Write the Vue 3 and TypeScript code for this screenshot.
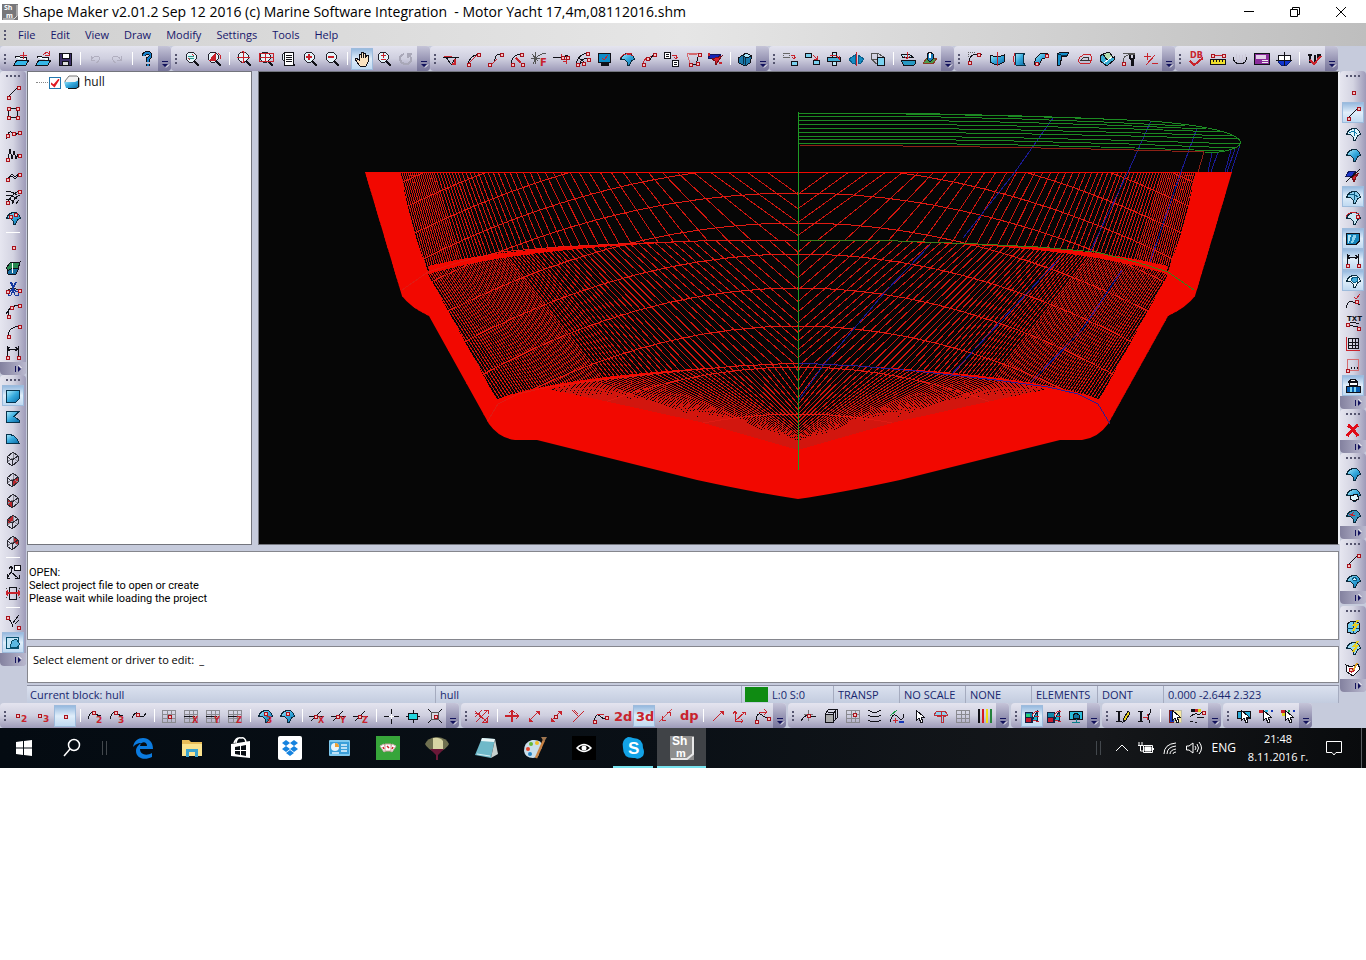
<script setup lang="ts">
import { ref, computed } from 'vue'

interface Shape { d?: string; s: string; f: string; w: number; t?: string; x?: number; y?: number; z?: number }
type Icon = Shape[]

const K = '#111118'
const R = '#c8232c'
const G = '#8a8a90'
const BL = 'url(#sea)'

const L = (d: string, s = K, w = 1): Shape => ({ d, s, f: 'none', w })
const F = (d: string, f: string, s = K, w = 1): Shape => ({ d, s, f, w })
const N = (x: number, y: number): Shape => F(`M${x - 1}.5 ${y - 1}.5h3v3h-3z`, '#f4c4c4', '#a8121c')
const T = (t: string, x: number, y: number, z: number, f = R): Shape => ({ t, x, y, z, s: 'none', f, w: 0 })

const dome = (f = BL): Shape => F('M1.500 8.500L3.500 4.500L7.500 2.500H11.500L14.500 5.500L15.500 8.500L12.500 9.500L10.500 14.500H8.500V11.500L5.500 8.500Z', f, '#0a2a3c')
const lens = (...extra: Shape[]): Icon => [F('M3 3L5 1H9L12 4V8L9 11H5L2 8V4Z', '#e4f4fa', '#22222c'), L('M10 10L15 15', K, 2), ...extra]
const folder: Shape[] = [F('M2 7V5H6L7 6H13V9', '#eef9fc'), F('M1 14L4 9H16L13 14Z', '#35b6e6')]
const cube = (a = 'none', b = 'none', c = 'none', e = 'none'): Icon => [
  F('M2 6L7 9V15L2 11Z', a, 'none'), F('M7 9L13 5V10L7 15Z', b, 'none'), F('M2 6L8 1V8L2 11Z', c, 'none'), F('M8 1L13 5V10L8 7Z', e, 'none'),
  L('M2 11L8 7L13 10M8 7V1', '#8b8b95'), L('M2 6L8 1L13 5V10L7 15L2 11ZM2 6L7 9L13 5M7 9V15', '#2b2b33'),
]
const grid = (c = G): Shape => L('M1.500 2.500H14.500V14.500H1.500ZM6 2V14M10 2V14M1 6.500H15M1 10.500H15', c)
const arrowUp: Shape[] = [L('M3 13L13 3', R), F('M10 3H13V6Z', R, R)]
const cursor: Shape = F('M5 2V13L8 10L10 15L12 14L10 9H13Z', '#fff')
const surfer: Shape[] = [F('M1 4H8V14H1Z', '#18a', '#124'), F('M1 9H7V14H1Z', '#c21a2c', '#124'), F('M8 12L13 4V12Z', '#19b0c8', '#124'), L('M8 8Q10 3 15 3M9 12L15 14M11 8H15', R)]

const icons: Record<string, Icon> = {
  'open-add': [...folder, L('M10.500 1V8M7 4.500H14', R)],
  open: [...folder, L('M8 4Q11 0 14 3M14 0V4H10', R)],
  save: [F('M2 2H14V14H2Z', '#3d3168'), F('M5 2H12V7H5Z', '#fff'), F('M5 10H11V14H5Z', '#ddd')],
  undo: [L('M4 5V9H8M4 9Q8 3 12 6Q14 9 9 12', '#b0aebf')],
  redo: [L('M12 5V9H8M12 9Q8 3 4 6Q2 9 7 12', '#b0aebf')],
  help: [L('M5 5Q5 2 8 2Q12 2 11.500 5Q11 7 8.500 8V11M8.500 13V15', K, 4), L('M5 5Q5 2 8 2Q12 2 11.500 5Q11 7 8.500 8V11M8.500 13V15', '#157fc9', 2)],
  'zoom-back': lens(L('M4 5H10M10 7H4', '#2a9a8a'), L('M8 3L10 5M4 7L6 9', R)),
  'zoom-dyn': lens(F('M4 9L9 3V9Z', R, R), L('M12 2Q16 5 14 8', R)),
  'zoom-all': lens(L('M7.500 0V12M1 6.500H14M5 2L7 0L9 2M5 10L7 12L9 10', R)),
  'zoom-win': [...lens(), L('M1.500 2.500H15.500V10.500H1.500ZM1 6.500H15M7 3V10', R)],
  'zoom-page': lens(F('M4 1H13V14H4Z', '#fff'), L('M6 4H12M6 6H12M6 8H12M6 10H12')),
  'zoom-in': lens(L('M7 3V9M4 6H10', R, 2)),
  'zoom-out': lens(L('M4 6H10', R, 2)),
  pan: [F('M5 14L1 8L2 7L5 9V3H7V7L7 1H9V7L10 2H11V7L13 4H14V11L12 15H6Z', '#fbe3c0')],
  'zoom-pm': lens(L('M7.500 2V7M5 4.500H10M5 8.500H10', R)),
  rotate: [L('M6 3Q2 4 2 8Q3 13 8 13Q13 13 13 8Q13 5 10 3M10 7V3H14', '#a9a8b8', 2)],
  angle: [L('M0 6H16M3 6Q8 14 10 14M13 6L9 13'), L('M1 5H9', R), L('M12 8V13H9', R, 2)],
  'spline-a': [L('M3 13Q4 6 13 3'), L('M3 13L13 3', R), N(3, 13), N(13, 3)],
  'spline-b': [L('M2 13Q8 13 8 8Q8 3 14 3'), L('M5 13L10 8', R), N(2, 13), N(14, 3)],
  'spline-c': [L('M2 14Q2 4 12 3'), L('M7 7L12 12', R, 2), N(12, 3), N(3, 13), N(13, 13)],
  formula: [L('M4 1V13M0 7H9M1 3L7 10M2 13Q5 3 15 2', '#555'), T('F', 9, 15, 10)],
  tangent: [L('M0 6H10L15 4'), L('M8 3V8H13V13M10 10H14', R), N(9, 6), N(14, 6)],
  fan: [L('M1 14Q2 4 12 2M5 13Q6 7 14 7M5 11L10 14M4 7L9 11'), N(12, 2), N(13, 8), N(2, 13), N(8, 12)],
  display: [F('M1.500 2.500H13.500V11.500H1.500Z', '#0e8cc7'), F('M4 12H11V14H4Z', K), L('M5 7L7 9L11 4', R)],
  'surf-red': [dome(), L('M1 7Q6 0 14 5', R), L('M5 4Q9 1 13 3', R)],
  'pt-curve': [L('M2 14Q3 8 6 7Q9 7 13 3', R), L('M9 9L12 4', K), N(13, 3), N(6, 7), N(2, 13)],
  swap: [F('M1.500 1.500H7.500V7.500H1.500Z', '#fff'), L('M3 3H6M3 5H6'), F('M9.500 9.500H15.500V15.500H9.500Z', '#fff'), L('M11 11H14M11 13H14'), L('M9 4H13V8M11 6L13 8L15 6', R)],
  mesh: [L('M2 2L5 13M14 2L2 2Q8 6 14 2', '#d4686d'), L('M5 13H11L14 3'), N(5, 13), N(12, 12), N(14, 3)],
  'surf-rb': [F('M1 7L4 3H10L14 4L8 8Z', '#1624b8', '#11165e'), F('M5 8L15 5L12 9L9 14L8 10Z', '#d9202c', '#7a1018'), L('M2 2V5M12 12H15', R, 2)],
  solid: [F('M1 7L6 4L9 2L15 5L13 12L8 15L2 12Z', '#1a78aa'), F('M6 4L9 2L15 5L9 7Z', '#a8e6fa'), L('M6 4V13M9 7L8 15', '#0a3146')],
  'copy-a': [F('M1 2H8V3H1ZM1 6H8V7H1ZM1 4H2V5H1ZM7 4H8V5H7Z', '#666', 'none'), F('M9.500 10.500H15.500V14.500H9.500Z', '#7ad1ef'), L('M9 4H12V8M10 6L12 8L14 6', R)],
  'copy-b': [F('M1.500 2.500H7.500V6.500H1.500Z', '#7ad1ef'), F('M9.500 9.500H15.500V13.500H9.500Z', '#7ad1ef'), L('M9 4L13 8M13 5V8H10', R)],
  'rot-obj': [F('M6.500 1.500H10.500V14.500H6.500Z', '#bce8f6'), F('M1.500 6.500H14.500V10.500H1.500Z', '#45aed6'), L('M4 5Q9 2 13 8M13 5V9', R)],
  mirror: [F('M7 4L1 8L4 12L7 13Z', '#148cc4', '#0c5d88'), F('M10 4L16 8L13 12L10 13Z', '#148cc4', '#0c5d88'), L('M8.500 1V15', R)],
  scale: [L('M1 2H7V8H1ZM7 2L14 6M1 8L8 14', '#555'), F('M7.500 6.500H14.500V14.500H7.500Z', '#7ad1ef')],
  importer: [F('M1.500 3.500H9.500L13.500 6.500H2.500Z', '#bdeaf8'), F('M1.500 9.500H15.500V12.500L13.500 14.500H3.500Z', '#2798c2'), L('M7 1V8M4 5L7 8L10 5', R)],
  project: [F('M1 12L5 7H15L11 13Z', '#4d9a4b', '#8a3a22'), F('M5 3L8 1L11 3V8L8 11L5 8Z', '#167db9'), L('M8 2V7', '#fff', 2)],
  round: [L('M2 14V11Q2 4 9 3H15'), F('M1 1H2V2H1ZM3 1H4V2H3ZM5 1H6V2H5ZM1 3H2V4H1ZM1 5H2V6H1ZM7 1H8V2H7Z', '#666', 'none'), N(11, 3), N(2, 11)],
  shell: [F('M1 4L4 5H12L15 4V11L11 13H5L1 11Z', BL), L('M8.500 1V15', R)],
  wall: [F('M5 2H14L12 5V11L14 14H5L4 10V6Z', BL, '#0a3146'), L('M4 2Q1 8 4 14', R)],
  pipe: [F('M1 13L3 7L8 2H14L15 6L9 8L6 14Z', BL), N(3, 12), N(13, 4)],
  bracket: [F('M2 3L6 1H14L12 5H7L5 14H2Z', '#138dc8'), L('M2 3L6 4H12', '#06324a')],
  ring: [L('M1 10L3 6L8 3H13L15 7L13 12H3Z', R), L('M4 9L7 6H11L12 9Z', '#333')],
  fold: [F('M1 5L4 3L8 8L15 6V9L8 15L1 10Z', '#3aaed3'), F('M4 3L10 1L14 6L8 9Z', '#b6dfb0'), L('M5 12L13 6', '#fff')],
  knot: [L('M2 14V9Q3 3 14 3M2 2H14', '#555'), L('M11 8V15', K, 3), L('M9 4V7L11 9L13 7V4', K, 2), N(2, 12)],
  plusminus: [L('M1 5H8M4.500 2V9M3 14L12 4M9 12H15', R)],
  db: [T('DB', 2, 7, 8), L('M2 10L6 14L15 7', R, 2)],
  ruler: [L('M1 4H15', R), N(2, 4), N(13, 4), F('M0.500 8.500H15.500V13.500H0.500Z', '#f1e02d'), L('M3 9V11M6 9V11M9 9V11M12 9V11')],
  bowl: [L('M4 3V11M7 4V13M10 4V13M13 3V10', '#ccc8d8'), L('M1 6Q2 13 8 13Q14 13 15 6')],
  calc: [F('M0.500 2.500H15.500V13.500H0.500Z', '#8b2c9b'), F('M2 4H11V7H2Z', '#e2cfe8', '#e2cfe8'), L('M8 9H14M8 11H14', '#eee')],
  hydro: [F('M2 4H14V10L11 14H5L2 10Z', '#fff'), F('M2 9H14V11L11 14H5L2 11Z', '#1034cc', '#0b1d70'), L('M8.500 1V15M0 9H16')],
  check: [L('M2 4H6M4 3V12M9 4V12M12 3V8M14 3V6', K, 2), L('M4 9L8 13L15 5', R, 2)],

  line: [L('M3 13L13 3'), N(3, 13), N(13, 3)],
  rect: [L('M3.500 3.500H12.500V12.500H3.500Z'), N(3, 3), N(12, 3), N(3, 12), N(12, 12)],
  wave: [L('M1 13Q3 5 6 6T10 8T14 6'), N(2, 9), N(8, 7), N(14, 6)],
  zigzag: [L('M1 13L3 12L5 2L7 12L9 4L11 12L13 7'), N(2, 12), N(14, 8)],
  poly: [L('M2 11L7 6L10 9L14 6M2 11L7 8L10 11L14 7'), N(2, 11), N(14, 6)],
  network: [L('M1 2Q8 3 12 6M1 6Q7 6 12 10M1 10Q7 10 9 14M14 2Q7 5 2 14M15 6Q9 8 7 15M14 11L11 15'), N(14, 2), N(2, 13)],
  'dome-nodes': [dome(), N(5, 6), N(10, 4)],
  point: [N(8, 8)],
  cards: [F('M1 8L5 3L15 2L13 9L5 12Z', '#278a51'), F('M2 11L8 8H14L11 14L3 14Z', '#176d9e'), L('M8 3L7 13', '#fff')],
  trim: [L('M1 12Q4 5 14 9', '#222'), L('M6 1L9 9M11 1L7 9', '#14389e', 2), L('M8 9L3 11V14H6ZM8 9L13 11V14H10Z', '#14389e'), N(2, 10), N(14, 9)],
  tang2: [L('M1 12L6 5L14 3M3 14V8Q5 4 14 3'), N(6, 5), N(14, 3), N(3, 14)],
  arc: [L('M3 14V11Q5 4 14 3'), N(14, 3), N(3, 13)],
  dim: [L('M2 2V14M13 2V14M2 5H13M5 3L2 5L5 7M10 3L13 5L10 7'), N(2, 13), N(13, 13)],
  face: [F('M1.500 2.500H14.500V10.500L10.500 14.500H1.500Z', BL, '#07334c')],
  notch: [F('M1.500 2.500H14L9 7.500L14 11V13.500H1.500Z', BL, '#07334c')],
  quarter: [F('M1 4H4L9 6L12 9L14 13H1Z', BL, '#07334c')],
  'cube-0': cube(), 'cube-1': cube('none', '#b9272d'), 'cube-2': cube('#b9272d'), 'cube-3': cube('none', 'none', '#b9272d'), 'cube-4': cube('none', 'none', 'none', '#b9272d'),
  axes: [L('M2 14L6 8L13 14M6 8V3M4 5L6 2L8 5M2 10V14H5M10 14H14V11'), F('M9.500 1.500H15.500V6.500H9.500Z', '#fff')],
  stretch: [L('M4.500 2V14H11.500V2Z'), F('M1 3H2V4H1ZM1 12H2V13H1ZM14 3H15V4H14ZM14 12H15V13H14Z', '#444', 'none'), L('M1 8H15', R, 2), L('M3 5L1 8L3 11M13 5L15 8L13 11', R)],
  tweak: [L('M2 3Q7 8 8 13M14 1L8 9M10 10L14 6', K), N(2, 3), N(13, 13)],
  'face-sel': [F('M1.500 2.500H13.500V13.500H1.500Z', '#c4e6f6', '#07506e'), F('M5 12L7 6L11 4L15 9L12 13Z', '#5bb8e2', '#084d68')],
  'dome-open': [dome('#dff6fd'), L('M4 7Q8 4 12 8M9 3V10', '#127aa8')],
  dome: [dome()],
  'dome-cut': [F('M1 8L4 3H11L7 8Z', '#1b35c5', '#11165e'), F('M7 9L14 5L11 9L9 14Z', '#d4242d', '#7a1018'), L('M1 14L15 1')],
  'dome-x': [dome('#8bcdec'), L('M4 6Q8 4 13 8M9 3L10 11', '#0b5b81')],
  'dome-red': [dome('#c9e8f5'), L('M1 7Q4 0 14 4', R), N(12, 6)],
  plates: [F('M1.500 2.500H14.500V10L11 13.500H1.500Z', '#1685bb'), F('M3 4H6L4 12H3Z', '#b2e6f7', 'none'), F('M8 4H11Q11 9 7 12H6Z', '#8bd3ee', 'none')],
  'dome-half': [dome('#eaf8fd'), F('M6 7L8 4H12L13 8L9 10Z', '#45addb', '#0a5b81')],
  'curve-check': [L('M1 14Q3 5 8 8T15 10'), L('M9 3L11 5L15 0', R), N(11, 7)],
  txt: [T('TXT', 2, 6, 7, K), L('M2 9Q8 6 14 9M3 10L13 12'), N(2, 9), N(13, 13)],
  gridred: [L('M3.500 2.500H13.500V12.500H3.500ZM7 2V12M10 2V12M3 6H14M3 9H14'), L('M1.500 1V14.500H15', R)],
  bracketred: [L('M2.500 2.500V13.500H13.500V2.500Z', '#d56c70'), L('M6 12V10M9 12V10M12 12V10'), N(2, 13)],
  worker: [F('M4 4L6 1H10L12 4V7H4Z', '#fff'), F('M1 8H15V14H1Z', '#075db0'), L('M3 4H13', K, 2), L('M6 9V14M10 9V14', '#7dd6f3', 2)],
  cross: [L('M3 3Q9 8 13 14M13 3Q8 7 2 14', '#e00b17', 3)],
  'dome-sheet': [dome(), F('M5 9L12 7L14 12L9 14L5 12Z', '#dff4fb')],
  'dome-dots': [dome('#3793bd'), L('M4 6L10 8M9 4L6 8', R)],
  'dome-hole': [dome(), F('M7 6L10 4L12 7L9 8Z', '#d6f0fa', '#0b5b81')],
  'box-flash': [F('M2 5L7 2L14 4V12L9 15L2 13Z', '#72ccef'), L('M2 9H14M8 3V15', '#0b4d6e'), L('M13 1L9 6H12L8 12', '#e7cf20', 2)],
  'dome-flash': [dome('#9bd9f1'), L('M13 1L9 6H12L8 12', '#e7cf20', 2)],
  tag: [F('M1 4L6 6L13 3L15 8L8 15L2 11Z', '#fff'), N(5, 8), L('M12 2L8 10', '#dfa328', 2), L('M6 12L10 9', R)],

  p2: [N(4, 7), T('2', 8, 14, 9)], p3: [N(4, 7), T('3', 8, 14, 9)],
  c2: [L('M1 11Q4 1 8 5T14 7'), N(6, 4), T('2', 9, 15, 9)],
  c3: [L('M1 11Q4 1 8 5T14 7'), N(6, 4), T('3', 9, 15, 9)],
  c0: [L('M1 10Q5 1 9 8Q12 11 15 5'), N(6, 6)],
  grid: [grid(), N(8, 8)],
  gx: [grid(), L('M1 8H12'), T('X', 9, 15, 8)], gy: [grid(), L('M1 8H12'), T('Y', 9, 15, 8)], gz: [grid(), L('M1 8H12'), T('Z', 9, 15, 8)],
  d3: [dome(), N(8, 5), T('3', 9, 15, 9)], d0: [dome(), N(8, 5)],
  lx: [L('M2 13L12 3M0 8H15'), N(6, 8), T('X', 9, 15, 8)], ly: [L('M2 13L12 3M0 8H15'), N(6, 8), T('Y', 9, 15, 8)], lz: [L('M2 13L12 3M0 8H15'), N(6, 8), T('Z', 9, 15, 8)],
  target: [L('M8.500 1V6M8.500 11V16M1 8.500H6M11 8.500H16'), L('M8.500 6V11M6 8.500H11', '#fff')],
  chip: [F('M3.500 5.500H12.500V11.500H3.500Z', '#24d7df'), L('M8 2V5M8 12V15M1 8H3M13 8H15')],
  boxcross: [L('M1 1L15 15M15 1L1 15'), F('M4.500 4.500H11.500V11.500H4.500Z', '#d7d7df', '#555'), N(8, 8)],
  arrows: [L('M1 3L13 14M2 14L14 2M1 9L8 2M8 15L15 8', R), L('M10 2H14V6M9 14H13V10', R), L('M1 5H5V9', R)],
  move: [L('M8 2V14M1 8H15', R, 2), L('M5 5L8 2L11 5M12 5L15 8L12 11', R)],
  diag: [...arrowUp, F('M3 10V13H6Z', R, R)],
  diagn: [...arrowUp, F('M3 10V13H6Z', R, R), N(7, 8)],
  perp: [L('M2 2L8 8M3 14L14 3M4 2L8 6', R)],
  wander: [L('M2 13Q4 4 8 8T14 10'), L('M5 6H12', R), N(2, 13), N(14, 9)],
  t2d: [T('2d', 0, 13, 13)], t3d: [T('3d', 0, 13, 13)], tdp: [T('dp', 0, 12, 13)],
  dashdiag: [L('M1 14L14 1', '#cf4a50'), L('M9 4H12V8M4 8V12H8', R)],
  arrow: arrowUp,
  vee: [L('M3 5V13H11M3 13L13 4', R), L('M1 6L3 3L5 6M10 4H13V7M9 11L11 13L9 15', R)],
  curvearrow: [L('M2 13Q3 3 8 7T14 10'), L('M5 4H13M10 1L13 4L10 7', R), N(2, 13), N(14, 10)],
  crossline: [L('M0 13Q4 6 8 8T15 8'), L('M7 2V13M3 6H12', '#777'), N(7, 7)],
  cubes: [F('M2 6H10V14H2Z', '#aaa'), L('M5 4H12V11M2 6L6 1H14V10L10 14M10 6L14 1')],
  gridnode: [grid(), N(9, 6)],
  contours: [L('M1 2Q8 7 14 2M1 7Q8 11 14 7M1 12Q8 16 14 12', K, 1)],
  shape: [L('M1 14Q4 3 9 9T15 6'), L('M1 8L8 2', '#159a42'), L('M4 12H9M6 10V15', R), L('M10 14H15', '#1537b8', 2)],
  cursor: [cursor],
  'red-dome': [F('M1 7L4 3H12L15 7L10 9V14H8V9Z', '#8fd0ec', '#b8303a'), L('M4 7H13M8 3V12', R)],
  gridg: [grid()],
  bars: [L('M2 1V15', K, 2), L('M6 1V15', '#d51920', 2), L('M10 1V15', '#f0df15', 2), L('M14 1V15', '#24813c', 2)],
  'surf-g': [...surfer, L('M2 7H6', '#26d17b', 3)], 'surf-r': surfer,
  monitor: [F('M1.500 3.500H14.500V11.500H1.500Z', '#2cbdda'), F('M5 7L8 5L11 7V10H5Z', '#1375a0'), L('M8 11V14M4 14H12', '#0a7f8c')],
  pen: [L('M1 3H7M1 13H7', K), L('M4 3V13', K, 2), F('M8 14L9 10L13 3L15 5L11 12Z', '#e6d01d')],
  insert: [L('M1 3H6M1 13H6', K), L('M4 3V13', K, 2), L('M6 9H12M10 6L12 9L10 12', R), L('M13 1V5L11 8L13 15')],
  palette: [F('M2 2H7V14H2Z', '#1537b8', '#802020'), F('M7 2H14V14H7Z', '#f7e79e', '#bba'), cursor],
  swatch: [F('M2 1H5V3H2Z', K), F('M6 1H8V3H6Z', R, R), F('M9 1H11V3H9Z', '#d8d219', '#d8d219'), L('M1 9Q6 4 10 7L14 3M8 9L15 10M1 13H4M6 14H8'), N(14, 4)],
  'cur-face': [F('M1 3H14V10H1Z', '#29acd8'), cursor],
  'cur-dots': [L('M1 3H5', R, 3), L('M7 3H10', '#25b4dc', 2), L('M13 3H15', '#1537b8', 2), cursor],
  'cur-color': [L('M1 3H5', R, 3), L('M2 6H6', '#d8d219', 3), L('M8 3H10', '#22aa55', 2), L('M13 3H15', '#1537b8', 2), cursor],
}

const top = [
  'open-add open save | undo redo | help',
  'zoom-back zoom-dyn | zoom-all zoom-win zoom-page zoom-in zoom-out | *pan zoom-pm rotate',
  'angle spline-a spline-b spline-c formula tangent fan display surf-red pt-curve swap mesh surf-rb | solid',
  'copy-a copy-b rot-obj mirror scale | importer project',
  'round shell wall pipe bracket ring fold knot plusminus',
  'db ruler bowl calc hydro | check',
].map(s => s.split(' '))
const left = [
  'line rect wave zigzag poly network dome-nodes | point cards trim tang2 arc dim',
  '*face notch quarter cube-0 cube-1 cube-2 cube-3 cube-4 | axes stretch | tweak *face-sel',
].map(s => s.split(' '))
const right = [
  'point *line dome-open dome dome-cut *dome-x dome-red *plates *dim *dome-half curve-check txt gridred bracketred *worker',
  'cross', 'dome dome-sheet dome-dots', 'line dome-hole', 'box-flash dome-flash tag',
].map(s => s.split(' '))
const bottom = [
  'p2 p3 *point | c2 c3 c0 | grid gx gy gz | d3 d0 | lx ly lz | target chip boxcross',
  'arrows | move diag diagn perp wander t2d *t3d dashdiag tdp | arrow vee curvearrow',
  'crossline cubes gridnode contours shape cursor red-dome gridg bars',
  '*surf-g surf-r monitor', 'pen insert | palette swatch', 'cur-face cur-dots cur-color',
].map(s => s.split(' '))

const bars = [
  { id: 'top', groups: top }, { id: 'left', groups: left },
  { id: 'right', groups: right }, { id: 'bottom', groups: bottom },
]
const menus = ['File', 'Edit', 'View', 'Draw', 'Modify', 'Settings', 'Tools', 'Help']
const status = ['TRANSP', 'NO SCALE', 'NONE', 'ELEMENTS', 'DONT', '0.000 -2.644 2.323']
const hullVisible = ref(true)
const command = ref('_')

/* Hull body plan; distances are measured outwards from the centreline. */
const CX = 798
const interp = (pts: number[][], x: number): number => {
  for (let i = 1; i < pts.length; i++) {
    const [x0, y0] = pts[i - 1]
    const [x1, y1] = pts[i]
    if (x <= x1) return y0 + ((y1 - y0) * (x - x0)) / (x1 - x0)
  }
  return pts[pts.length - 1][1]
}
const upperChine = [[0, 240], [100, 241], [180, 244], [240, 247], [298, 252], [338, 262], [370, 272], [396, 290]]
const lowerChine = [[0, 363], [60, 366], [118, 371], [198, 380], [250, 387], [280, 394], [300, 404], [312, 424]]
const both = (x0: number, y0: number, x1: number, y1: number): string =>
  `M${(CX - x0).toFixed(1)} ${y0.toFixed(1)}L${(CX - x1).toFixed(1)} ${y1.toFixed(1)}M${(CX + x0).toFixed(1)} ${y0.toFixed(1)}L${(CX + x1).toFixed(1)} ${y1.toFixed(1)}`
const spacing = (first: number, used: number, power: number, least: number): number =>
  Math.max(least, Math.round(first * Math.pow(Math.max(0, 1 - used), power)))

const sections = computed(() => {
  let p = ''
  for (let d = 31; d < 433; d += spacing(22, d / 433, 1.2, 2)) {
    if (d < 94) p += both(d, 172, 0, 172 + d * 0.72)
    else {
      const c = d - (26 + 68 * Math.exp(-(d - 94) / 80))
      p += both(d, 172, c, interp(upperChine, c))
    }
  }
  for (let c = 14; c < 396; c += spacing(16, c / 400, 1.4, 2)) {
    const y = interp(upperChine, c)
    if (c < 140) p += both(c, y, 0, 240 + (123 * c) / 140)
    else {
      const e = c - (140 - (65 * (c - 140)) / 255)
      p += both(c, y, e, interp(lowerChine, e))
    }
  }
  for (let e = 5; e < 310; e += spacing(7, e / 400, 1, 3)) {
    p += both(e, interp(lowerChine, e), 0, 363 + 92 * (1 - Math.exp(-e / 55)))
  }
  return p
})
const buttocks = [[90, 59], [113, 61], [139, 64], [166, 66], [193, 66], [223, 72], [254, 79], [288, 87], [326, 90], [367, 94], [414, 100]]
const arcs = computed(() => buttocks.map(([y, k]) => {
  const w = y === 414 ? 120 : y === 367 ? 240 : 420
  const end = y + (k / 100000) * w * w
  return `M${CX - w} ${end}Q${CX} ${2 * y - end} ${CX + w} ${end}`
}).join(''))
const chine = (pts: number[][], side: number) => 'M' + pts.map(([x, y]) => `${CX + side * x} ${y}`).join('L')
const deckLines = [[113, 1150, 121], [116, 1185, 126], [120, 1206, 129], [124, 1222, 132], [128, 1232, 136], [132, 1238, 139], [136, 1240, 144], [139, 1236, 148], [143, 1224, 151]]
const deck = deckLines.map(([y, x, e]) => `M798 ${y}H860Q${(860 + x) / 2} ${y + 1} ${x} ${e}`).join('')

const tasks = ['edge', 'explorer', 'store', 'dropbox', 'control', 'cards', 'balloon', 'notepad', 'paint', 'eye', 'skype', 'shm']
</script>

<template>
  <main class="app">
    <header class="title">
      <svg class="logo" viewBox="0 0 16 16" aria-hidden="true">
        <path d="M0 0H16V16H0Z" fill="#77777a" /><path d="M1 15H12L15 12V1" fill="none" stroke="#ddd" />
        <text x="2" y="6" font-size="7" font-weight="700" fill="#fff">Sh</text><text x="4" y="14" font-size="7" font-weight="700" fill="#fff">m</text>
      </svg>
      <h1>Shape Maker v2.01.2 Sep 12 2016 (c) Marine Software Integration&nbsp; - Motor Yacht 17,4m,08112016.shm</h1>
      <div class="win">
        <button aria-label="Minimize"><svg viewBox="0 0 12 12"><path d="M1 5.500H11" /></svg></button>
        <button aria-label="Restore"><svg viewBox="0 0 12 12"><path d="M1.500 3.500H8.500V10.500H1.500ZM3.500 3V1.500H10.500V8.500H9" /></svg></button>
        <button aria-label="Close"><svg viewBox="0 0 12 12"><path d="M1 1L11 11M11 1L1 11" /></svg></button>
      </div>
    </header>

    <nav class="menu"><i class="grip"></i><button v-for="m in menus" :key="m">{{ m }}</button></nav>

    <div v-for="bar in bars" :key="bar.id" class="bar" :class="bar.id" role="toolbar" :aria-label="bar.id">
      <div v-for="(g, gi) in bar.groups" :key="gi" class="group">
        <i class="grip"></i>
        <template v-for="(n, i) in g" :key="i">
          <i v-if="n === '|'" class="sep"></i>
          <button v-else class="tool" :class="{ on: n[0] === '*' }" :aria-label="n.replace('*', '')">
            <svg viewBox="0 0 16 16" shape-rendering="crispEdges">
              <template v-for="(s, k) in icons[n.replace('*', '')]" :key="k">
                <text v-if="s.t" :x="s.x" :y="s.y" :font-size="s.z" :fill="s.f" font-weight="700">{{ s.t }}</text>
                <path v-else :d="s.d" :stroke="s.s" :fill="s.f" :stroke-width="s.w" />
              </template>
            </svg>
          </button>
        </template>
        <button class="cap" aria-label="More">
          <svg viewBox="0 0 8 8"><path d="M1 1.500H7" stroke="#12125c" /><path d="M1 4H7L4 7Z" fill="#12125c" /><path d="M5 7.500L8 4.500" stroke="#fff" /></svg>
        </button>
      </div>
    </div>

    <section class="center">
      <div class="work">
        <aside class="tree">
          <i class="dots"></i>
          <input id="hull" v-model="hullVisible" type="checkbox">
          <svg viewBox="0 0 16 16" aria-hidden="true"><path d="M1 7L5 2H13L15 4V13L12 14L2 12Z" fill="#f3f3f3" stroke="#777" /><path d="M0 8H11L15 6V13L12 14H2Z" fill="url(#sea)" /><path d="M14.500 4V13L12 14.500H4" fill="none" stroke="#111" /></svg>
          <label for="hull">hull</label>
        </aside>
        <div class="view">
          <svg viewBox="259 72 1079 472" role="img" aria-label="hull">
            <defs>
              <linearGradient id="sea" x1="0" y1="0" x2="1" y2="1"><stop offset="0" stop-color="#b4eefc" /><stop offset=".5" stop-color="#35a9dd" /><stop offset="1" stop-color="#0b6ca6" /></linearGradient>
              <clipPath id="outline"><path d="M365 172H1232L1195 296Q1187 307 1168 316L1108 424Q1098 438 1082 440H1060L900 480Q840 493 798 499Q757 493 697 480L537 440H515Q499 438 489 424L429 316Q410 307 402 296Z" /></clipPath>
            </defs>
            <g v-if="hullVisible" fill="none" shape-rendering="crispEdges">
              <g clip-path="url(#outline)">
                <path :d="sections" stroke="#d2160e" />
                <path :d="arcs" stroke="#e01a12" />
                <path d="M350 172H400L412 225L429 276L464 340L498 402L520 394L548 389L600 400L700 422L798 450L896 422L996 400L1048 389L1076 394L1098 402L1132 340L1167 276L1184 225L1196 172H1250V510H350Z" fill="#f20800" />
                <path d="M365 172.500H1232" stroke="#f20800" />
                <path d="M429 274Q520 246 740 240Q520 243 429 266ZM1167 274Q1076 246 900 242Q1076 243 1167 266ZM500 405Q560 376 780 364Q560 374 495 400ZM1096 405Q1036 376 820 364Q1036 374 1101 400Z" fill="#f20800" />
                <path :d="chine(upperChine, -1)" stroke="#e01a12" /><path :d="chine(lowerChine, -1)" stroke="#e01a12" />
              </g>
              <path :d="chine(upperChine, 1)" stroke="#3f7d18" /><path :d="chine(lowerChine, 1)" stroke="#2b1d96" />
              <path d="M1053 118L1015 172L963 238M930 245L885 292L825 363L798 401M1151 121L1128 172L1090 252M1060 258L1028 292L950 376M1197 128L1181 172L1150 262M1122 270L1082 330L1030 383M1212 153L1208 172M1218 152L1211 172M1231 150L1225 172M1235 149L1227 172M1240 145L1231 172" stroke="#1a1a94" />
              <path d="M798 145Q1050 147 1204 152L1198 172" stroke="#8c2116" />
              <path :d="deck" stroke="#1c8a22" />
              <path d="M798 113Q1000 114 1150 121Q1238 128 1241 143Q1236 152 1205 153" stroke="#1c8a22" />
              <path d="M798.500 112V470" stroke="#1f9a24" />
            </g>
          </svg>
        </div>
      </div>
      <output class="log">OPEN:<br>Select project file to open or create<br>Please wait while loading the project</output>
      <div class="command"><label for="cmd">Select element or driver to edit:</label><input id="cmd" v-model="command" type="text"></div>
      <footer class="status">
        <span>Current block: hull</span><span>hull</span><span class="layer"><i></i>L:0 S:0</span>
        <span v-for="s in status" :key="s">{{ s }}</span>
      </footer>
    </section>

    <footer class="taskbar">
      <button class="sys" aria-label="Start"><svg viewBox="0 0 24 24"><path d="M4 6L11 5V11.500H4ZM12 5L20 4V11.500H12ZM4 12.500H11V19L4 18ZM12 12.500H20V20L12 19Z" fill="#fff" /></svg></button>
      <button class="sys" aria-label="Search"><svg viewBox="0 0 24 24" fill="none" stroke="#fff" stroke-width="1.500"><circle cx="14" cy="9" r="5.500" /><path d="M10 13L4 20" /></svg></button>
      <i class="handle"></i>
      <button v-for="t in tasks" :key="t" class="task" :class="t" :aria-label="t">
        <svg viewBox="0 0 24 24">
          <path v-if="t === 'edge'" d="M2 11C3 5 7 2 12 2C18 2 22 6 22 13H9C9 19 16 20 21 17V21C13 25 5 22 5 15C5 11 8 8 11 7C6 7 4 9 2 11ZM9 10H16C16 5 10 5 9 10Z" fill="#0b7be0" />
          <g v-else-if="t === 'explorer'"><path d="M2 4H9L11 6H22V20H2Z" fill="#e9bd59" /><path d="M2 8H22V20H2Z" fill="#fbe38e" /><path d="M6 21V13H18V21H15V16H9V21Z" fill="#3ba3cf" /></g>
          <g v-else-if="t === 'store'"><path d="M2 8L21 5V22L2 20Z" fill="#fff" /><path d="M7 7Q8 1 12 2Q16 1 17 6M5 7Q7 2 10 2" fill="none" stroke="#fff" stroke-width="1.500" /><path d="M6 11L11 10V14H6ZM12 10L17 9V14H12ZM6 15H11V19L6 18ZM12 15H17V20L12 19Z" fill="#070c12" /></g>
          <g v-else-if="t === 'dropbox'"><rect width="24" height="24" rx="2" fill="#fff" /><path d="M8 4L12 7L8 10L4 7ZM16 4L20 7L16 10L12 7ZM8 10L12 13L8 16L4 13ZM16 10L20 13L16 16L12 13ZM12 14L16 17L12 20L8 17Z" fill="#1683df" /></g>
          <g v-else-if="t === 'control'"><rect x="2" y="4" width="21" height="16" rx="1" fill="#7ec8ee" /><path d="M3 6H22V18H3Z" fill="#3c9fd9" /><circle cx="8" cy="11" r="4" fill="#e8f5fc" /><path d="M8 11V7A4 4 0 0 1 12 11Z" fill="#f0a030" /><path d="M14 9H20M14 12H20M14 15H20M5 17H12" stroke="#e6f6ff" stroke-width="1.500" /></g>
          <g v-else-if="t === 'cards'"><rect width="24" height="24" fill="#37a53a" /><path d="M4 10L8 8L11 14L8 16ZM16 8L20 10L16 16L13 14Z" fill="#fff" stroke="#c9b0b0" /><path d="M9 8H15V15H9Z" fill="#fff" stroke="#c99" /><path d="M11 10L13 12M7 11L8 13M17 11L16 13" stroke="#d3222a" stroke-width="1.500" /></g>
          <g v-else-if="t === 'balloon'"><path d="M0 8Q2 2 12 1Q22 2 24 8Q22 13 12 17Q2 13 0 8Z" fill="#6f7050" /><path d="M8 2Q15 1 18 5V13H8Z" fill="#d7d4a4" /><path d="M5 13H19L13 19V24H11V19Z" fill="#6a1838" /></g>
          <g v-else-if="t === 'notepad'"><path d="M8 2L21 3L17 22L1 19Z" fill="#6fb9c9" /><path d="M8 2L21 3L20 6L7 5Z" fill="#e8f4f5" /><path d="M21 3L24 18L17 22Z" fill="#c7d1ce" /><path d="M3 18L16 20" stroke="#d6eef2" /></g>
          <g v-else-if="t === 'paint'"><path d="M1 15Q1 6 9 4Q19 3 19 10Q19 14 15 15Q18 21 10 22Q2 22 1 15Z" fill="#c9deea" /><circle cx="5" cy="13" r="2" fill="#e4452c" /><circle cx="8" cy="8" r="2" fill="#64b936" /><circle cx="14" cy="7" r="2" fill="#f0bd26" /><circle cx="7" cy="18" r="2" fill="#2684c4" /><path d="M21 4L13 22" stroke="#c98243" stroke-width="2.500" /><path d="M18 1H24L21 6Z" fill="#a07650" /></g>
          <g v-else-if="t === 'eye'"><rect width="24" height="24" fill="#000" /><path d="M5 12Q12 5 19 12Q12 19 5 12Z" fill="none" stroke="#fff" stroke-width="1.500" /><circle cx="12" cy="12" r="2.500" fill="#fff" /></g>
          <g v-else-if="t === 'skype'"><path d="M7 1Q10 1 12 2Q22 2 22 12Q24 16 22 20Q18 24 14 22Q2 23 2 12Q0 4 7 1Z" fill="#13a3e6" /><text x="7" y="18" font-size="17" font-weight="700" fill="#fff">S</text></g>
          <g v-else><path d="M0 0H24V24H0Z" fill="#8d8d8d" /><path d="M1 23H17L23 18V1" fill="none" stroke="#e8e8e8" stroke-width="2" /><text x="2" y="9" font-size="12" font-weight="700" fill="#fff">Sh</text><text x="6" y="21" font-size="11" font-weight="700" fill="#fff">m</text></g>
        </svg>
      </button>
      <div class="tray">
        <i class="handle"></i>
        <button aria-label="Show hidden icons"><svg viewBox="0 0 16 16"><path d="M2 11L8 5L14 11" /></svg></button>
        <button aria-label="Battery"><svg viewBox="0 0 16 16"><path d="M5.500 5.500H14.500V12.500H5.500ZM15.500 8V10M1 2V5M4 2V5M0 5.500H5M2.500 6V11H5" /><path d="M7 7H13V11H7Z" fill="#fff" /></svg></button>
        <button aria-label="Network"><svg viewBox="0 0 16 16"><path d="M2 14Q2 4 14 3M5 14Q5 7 14 6M8 14Q8 10 14 9M11 14Q11 12 14 12" /></svg></button>
        <button aria-label="Volume"><svg viewBox="0 0 16 16"><path d="M0.500 6H3L7 3V13L3 10H0.500ZM9 6Q11 8 9 10M11 4Q14 8 11 12M13 2Q18 8 13 14" /></svg></button>
        <span class="lang">ENG</span>
        <time>21:48<br>8.11.2016 г.</time>
        <button class="note" aria-label="Notifications"><svg viewBox="0 0 16 16"><path d="M0.500 1.500H15.500V12.500H10L8 15L6 12.500H0.500Z" /></svg></button>
        <i class="peek"></i>
      </div>
    </footer>
  </main>
</template>

<style>
body { margin: 0; background: #fff; }
</style>

<style scoped>
.app {
  height: 80vh;
  min-height: 768px;
  display: grid;
  grid-template: 23px 23px 25px minmax(0, 1fr) 25px 40px / 27px minmax(0, 1fr) 26px;
  grid-template-areas: 'title title title' 'menu menu menu' 'top top top' 'left center right' 'bottom bottom bottom' 'task task task';
  background: #c6cbdc;
  font-family: 'Open Sans', 'Noto Sans', sans-serif;
  font-size: 11px;
  color: #111;
}
button { border: 0; padding: 0; margin: 0; background: none; font: inherit; color: inherit; }
svg { display: block; overflow: visible; }
.title { grid-area: title; display: flex; align-items: center; background: #fff; overflow: hidden; }
.logo { width: 16px; height: 16px; margin: 0 5px 0 2px; }
h1 { margin: 0; font-size: 14px; line-height: 22px; font-weight: 400; white-space: nowrap; color: #000; }
.win { margin-left: auto; display: flex; padding-right: 2px; }
.win button { width: 46px; height: 22px; display: grid; place-items: center; }
.win svg { width: 12px; height: 12px; fill: none; stroke: #000; }
.menu { grid-area: menu; display: flex; align-items: center; background: linear-gradient(90deg, #d0d0d0, #e6e6e6 50%, #bebebe); color: #17176b; }
.menu .grip { margin-right: 1px; }
.menu button { padding: 0 8px 0 7px; line-height: 22px; }
.grip { flex: none; width: 10px; height: 11px; background: radial-gradient(circle, #55556f 1px, transparent 1px) 0 0 / 10px 4px; }

.bar { display: flex; min-width: 0; min-height: 0; }
.top { grid-area: top; }
.bottom { grid-area: bottom; gap: 2px; }
.left, .right { flex-direction: column; }
.left { grid-area: left; padding-right: 1px; }
.right { grid-area: right; }
.group { flex: none; display: flex; align-items: center; border-radius: 4px; background: linear-gradient(#e4e4ef, #cfcfdf 50%, #9d9ab8); }
.left .group, .right .group { flex-direction: column; background: linear-gradient(90deg, #e6e6f0, #d4d4e2 50%, #9d9ab8); }
.right .group:last-child { margin-top: 2px; }
.tool { width: 22px; height: 22px; display: grid; place-items: center; flex: none; }
.left .tool, .right .tool { height: 21px; }
.tool svg { width: 16px; height: 16px; font-family: 'DejaVu Sans', sans-serif; }
.on { background: linear-gradient(#8fb4dc, #e0eefa 50%, #bcd7f0); box-shadow: inset 0 0 0 1px #9dbbdc; }
.sep { flex: none; width: 8px; height: 13px; background: linear-gradient(#fff, #fff) 50% / 1px 100% no-repeat; }
.cap { flex: none; width: 13px; height: 100%; display: flex; align-items: flex-end; justify-content: center; padding-bottom: 3px; border-radius: 0 4px 4px 0; background: linear-gradient(#c5c4d8, #9290b0 60%, #77759a); box-sizing: border-box; }
.cap svg { width: 8px; height: 8px; fill: none; }
.left .grip, .right .grip { width: 16px; height: 10px; background: radial-gradient(circle, #55556f 1px, transparent 1px) 0 0 / 4px 10px; }
.left .sep, .right .sep { width: 14px; height: 8px; background: linear-gradient(#fff, #fff) 50% / 100% 1px no-repeat; }
.left .cap, .right .cap { width: 100%; height: 13px; align-items: center; justify-content: flex-end; padding: 0 4px 0 0; border-radius: 0 0 4px 4px; background: linear-gradient(90deg, #83819f, #b9b8ce); }
.left .cap svg, .right .cap svg { transform: rotate(-90deg); }

.center { grid-area: center; display: flex; flex-direction: column; min-width: 0; }
.work { flex: 1; min-height: 0; display: flex; gap: 6px; }
.tree { width: 225px; box-sizing: border-box; border: 1px solid #73757d; background: #fff; display: flex; align-items: flex-start; padding: 2px 0 0 8px; }
.dots { width: 12px; height: 1px; margin-top: 8px; border-top: 1px dotted #888; }
.tree input { appearance: none; box-sizing: border-box; width: 12px; height: 12px; margin: 3px 3px 0 1px; border: 1px solid #2477ae; background: #fff; display: grid; place-items: center; }
.tree input:checked::before { content: ''; width: 9px; height: 9px; background: #e01b24; clip-path: polygon(0 40%, 35% 65%, 90% 0, 100% 15%, 45% 100%, 0 60%); }
.tree svg { width: 16px; height: 16px; }
.tree label { margin-left: 4px; line-height: 16px; font-size: 12px; }
.view { flex: 1; min-width: 0; background: #060606; border: 1px solid #74767e; border-right: 2px solid #eef0f4; }
.view svg { width: 100%; height: 100%; overflow: hidden; }
.log { margin: 6px 1px 0 0; height: 89px; box-sizing: border-box; border: 1px solid #85868d; background: #fff; padding: 14px 0 0 1px; font: 11px/13px Roboto, 'Liberation Sans', sans-serif; color: #000; }
.command { margin: 6px 1px 0 0; height: 37px; box-sizing: border-box; border: 1px solid #85868d; background: #fff; display: flex; align-items: flex-start; padding: 5px; gap: 5px; color: #000; }
.command label, .command input { line-height: 16px; font-size: 11px; }
.command input { flex: 1; min-width: 0; height: 16px; border: 0; padding: 0; outline: 0; font-family: inherit; background: none; }
.status { margin: 2px 1px 0 0; display: grid; grid-template-columns: 409fr 306fr 92px repeat(5, 66px) 175px; height: 18px; border-top: 1px solid #8d90a3; box-sizing: border-box; background: linear-gradient(#dbe1ef, #c3ccdf); color: #17276e; }
.status span { padding-left: 3px; line-height: 18px; border-right: 1px solid #a5abbf; white-space: nowrap; overflow: hidden; }
.status span + span { padding-left: 4px; }
.status .layer { display: flex; align-items: center; gap: 4px; }
.status span.layer { padding-left: 3px; }
.layer i { width: 23px; height: 15px; background: #0f8b12; }

.taskbar { grid-area: task; display: flex; align-items: stretch; background: linear-gradient(90deg, #040b12, #0a1016 50%, #15171a 80%, #090b0d); color: #fff; }
.sys { width: 48px; display: grid; place-items: center; }
.sys svg { width: 24px; height: 24px; }
.handle { width: 3px; height: 14px; margin: 13px 11px 0 6px; border: solid #43484d; border-width: 0 1px; box-sizing: content-box; }
.task { width: 49px; display: grid; place-items: center; box-sizing: border-box; }
.task svg { width: 24px; height: 24px; font-family: 'Liberation Sans', sans-serif; }
.task.skype { background: linear-gradient(#76e2ee, #76e2ee) 50% 100% / 40px 2px no-repeat; }
.task.shm { background: linear-gradient(#76e2ee, #76e2ee) 50% 100% / 100% 2px no-repeat #404347; }
.tray { margin-left: auto; display: flex; align-items: center; }
.tray .handle { margin: 0 9px 0 0; }
.tray button { width: 24px; height: 40px; display: grid; place-items: center; }
.tray button svg { width: 16px; height: 16px; fill: none; stroke: #fff; }
.lang { margin-left: 6px; font-size: 12px; line-height: 40px; }
.tray time { width: 84px; text-align: center; font-size: 11px; line-height: 18px; }
.tray .note { width: 28px; }
.peek { width: 1px; height: 40px; margin: 0 4px 0 13px; background: #595d61; }
</style>
